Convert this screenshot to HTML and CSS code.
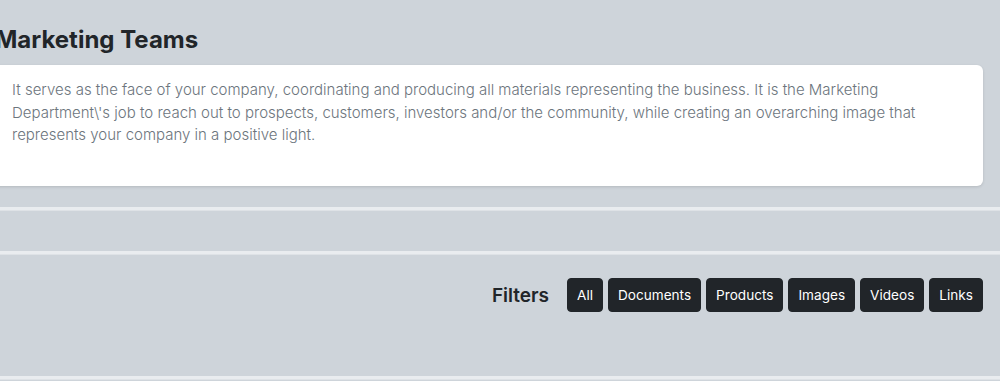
FILE: index.html
```html
<!DOCTYPE html>
<html lang="en">
<head>
    <meta charset="UTF-8">
    <meta name="viewport" content="width=device-width, initial-scale=1.0">
    <title>Marketing Teams</title>
    <link rel="stylesheet" href="styles.css">
</head>
<body>
    <main class="page">
        <section class="team">
            <h2 class="team-title">Marketing Teams</h2>
            <div class="team-card">
                <p class="team-text">It serves as the face of your company, coordinating and producing all materials representing the business. It is the Marketing Department\'s job to reach out to prospects, customers, investors and/or the community, while creating an overarching image that represents your company in a positive light.</p>
            </div>
        </section>

        <hr class="divider">
        <div class="gap-row"></div>
        <hr class="divider">

        <div class="filter-bar">
            <span class="filter-label">Filters</span>
            <div class="filter-buttons">
                <button class="filter-btn">All</button>
                <button class="filter-btn">Documents</button>
                <button class="filter-btn">Products</button>
                <button class="filter-btn">Images</button>
                <button class="filter-btn">Videos</button>
                <button class="filter-btn">Links</button>
            </div>
        </div>

        <hr class="divider">
    </main>
</body>
</html>
```

FILE: styles.css
```css
body {
    margin: 0;
    padding: 0;
    background-color: #ced4da;
    font-family: Inter, "Noto Sans", sans-serif;
    color: #212529;
    overflow: hidden;
}

.page {
    width: 100%;
}

.team {
    padding: 0 17px 21px 0;
    margin-left: -12px;
}

.team-title {
    font-size: 24px;
    font-weight: 700;
    line-height: 29px;
    margin: 25px 0 11px 7px;
    color: #212529;
}

.team-card {
    background-color: #ffffff;
    border-radius: 6px;
    box-shadow: 0 1px 3px rgba(0, 0, 0, 0.12);
    padding: 14px 12px 0 24px;
    min-height: 107px;
}

.team-text {
    margin: 0;
    font-size: 15px;
    font-weight: 300;
    line-height: 22.5px;
    color: #6c757d;
}

.divider {
    margin: 0;
    border: none;
    border-top: 3px solid #e9ecef;
    border-bottom: 1px solid #dee2e6;
    height: 0;
}

.gap-row {
    height: 40px;
}

.filter-bar {
    display: flex;
    justify-content: flex-end;
    align-items: center;
    gap: 18px;
    padding: 23px 17px 64px 0;
}

.filter-label {
    font-size: 19px;
    font-weight: 600;
    color: #212529;
}

.filter-buttons {
    display: flex;
    gap: 5px;
}

.filter-btn {
    font-family: Inter, "Noto Sans", sans-serif;
    font-size: 13.6px;
    line-height: 20px;
    color: #ffffff;
    background-color: #212529;
    border: 1px solid #212529;
    border-radius: 4px;
    padding: 6px 9px;
    cursor: pointer;
}
```
